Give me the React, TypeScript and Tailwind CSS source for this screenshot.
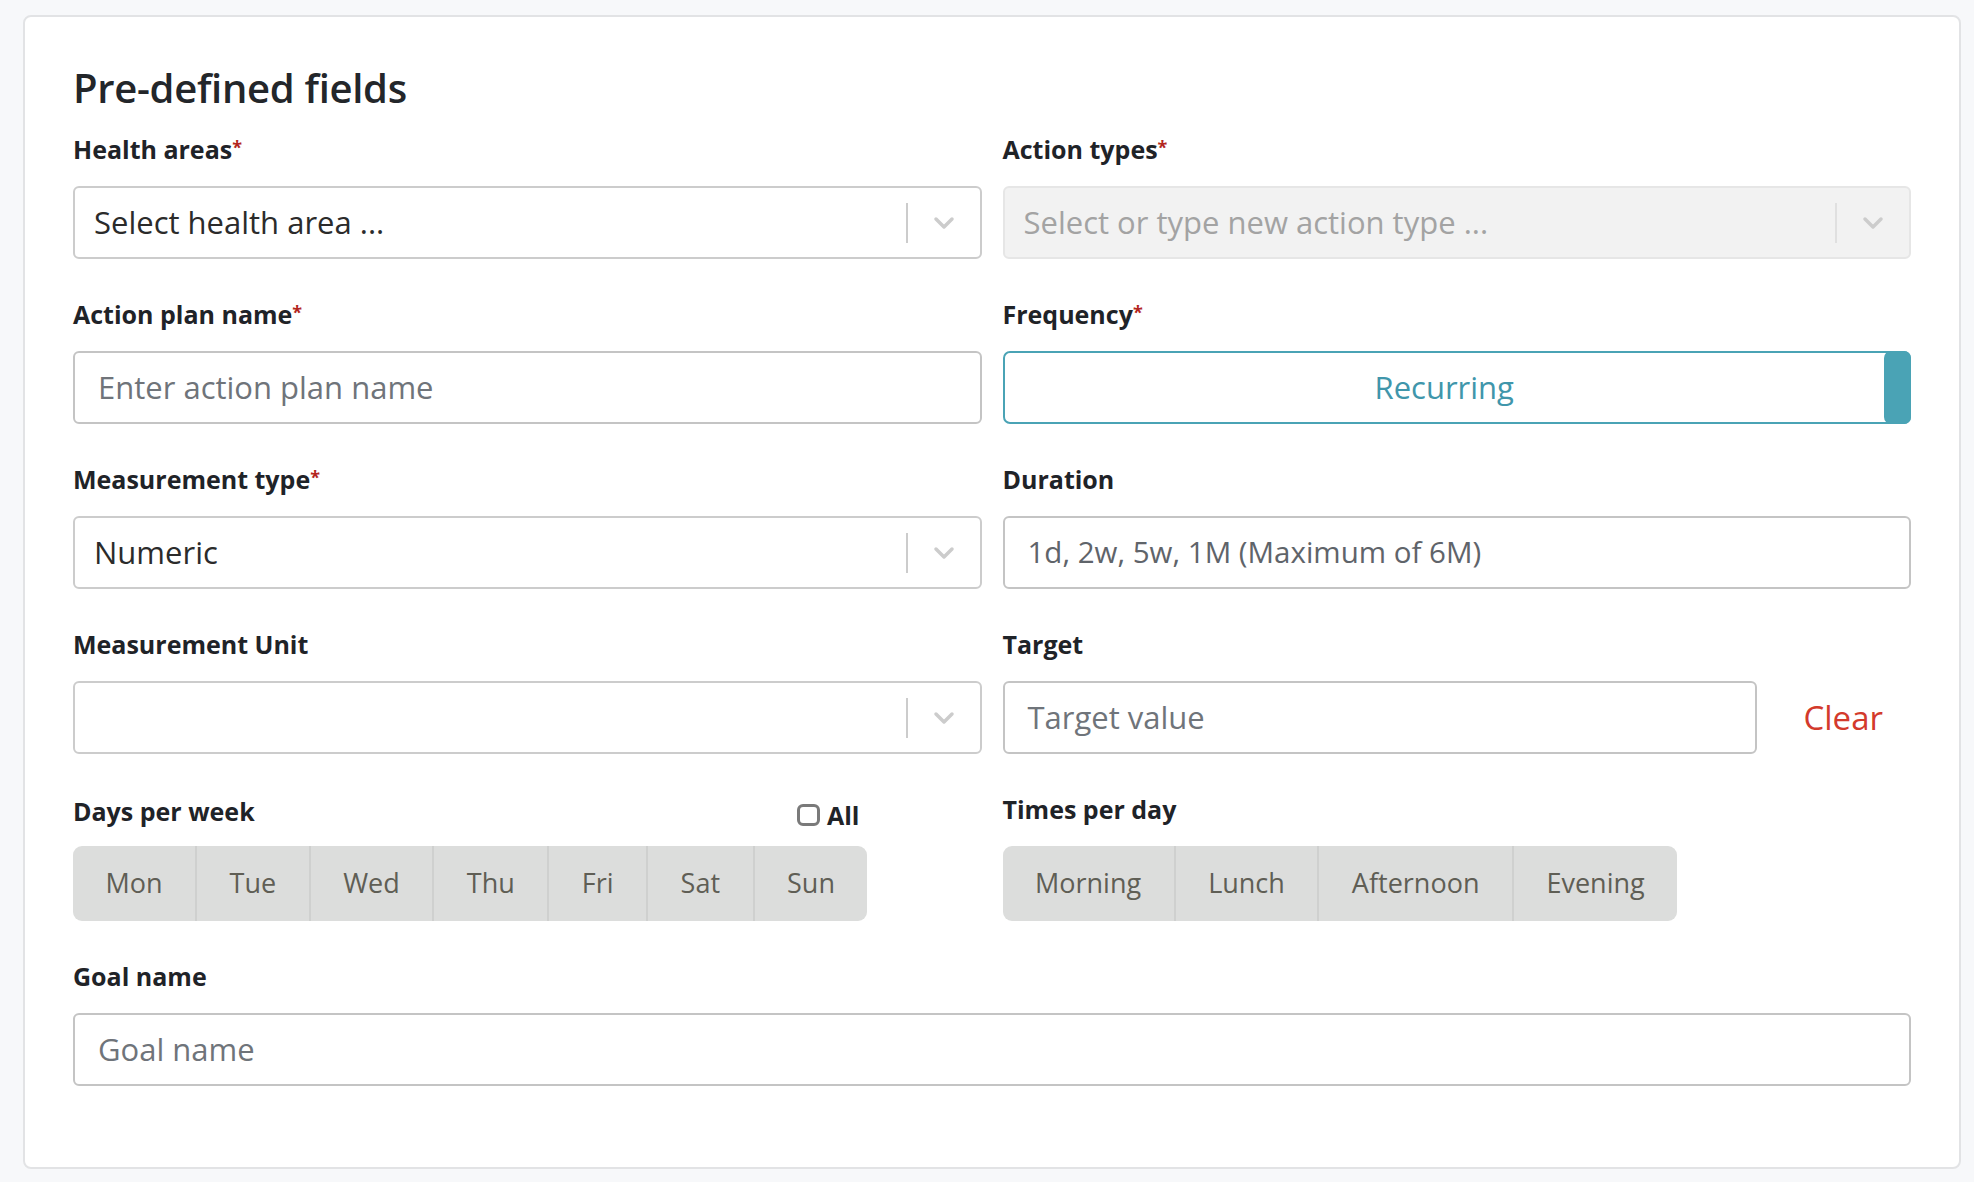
import React from "react";

const font = { fontFamily: "'Open Sans', Lato, sans-serif" };

function Label({ text, required }: { text: string; required?: boolean }) {
  return (
    <div className="h-[30px] leading-[30px] text-[25px] font-bold text-[#1f2328]">
      {text}
      {required && <span className="text-[#b3261e] text-[18px] align-top leading-[26px]">*</span>}
    </div>
  );
}

function Chevron() {
  return (
    <svg width="22" height="14" viewBox="0 0 22 14" fill="none">
      <path d="M3 3 L11 11 L19 3" stroke="#cccccc" strokeWidth="3.5" strokeLinecap="round" strokeLinejoin="round" />
    </svg>
  );
}

function Select({ value, placeholder, disabled }: { value?: string; placeholder?: string; disabled?: boolean }) {
  return (
    <div
      className={`h-[73px] flex items-center rounded-[6px] border-2 ${
        disabled ? "bg-[#f2f2f2] border-[#e6e6e6]" : "bg-white border-[#cccccc]"
      }`}
    >
      <div className={`flex-1 pl-[19px] text-[31px] ${value ? "text-[#2b2b2b]" : disabled ? "text-[#a3a3a3]" : "text-[#2b2b2b]"}`}>
        {value || placeholder}
      </div>
      <div className={`w-[2px] h-[40px] ${disabled ? "bg-[#e0e0e0]" : "bg-[#cccccc]"}`} />
      <div className="w-[72px] flex items-center justify-center">
        <Chevron />
      </div>
    </div>
  );
}

function Input({ placeholder, className = "" }: { placeholder: string; className?: string }) {
  return (
    <div className={`h-[73px] flex items-center rounded-[6px] border-2 border-[#c4c4c4] bg-white pl-[23px] ${className}`}>
      {placeholder}
    </div>
  );
}

function Segments({ items }: { items: string[] }) {
  return (
    <div className="flex h-[75px] w-fit rounded-[9px] bg-[#dcdddc] overflow-hidden">
      {items.map((d, i) => (
        <div
          key={d}
          className={`flex items-center px-[32.5px] text-[27px] text-[#5f5e55] ${i > 0 ? "border-l-2 border-[#cfd0cf]" : ""}`}
        >
          {d}
        </div>
      ))}
    </div>
  );
}

export default function App() {
  return (
    <div style={font} className="min-h-screen bg-[#f7f8fa] pl-[23px] pr-[13px] pt-[15px] pb-[14px]">
      <div className="bg-white border-2 border-[#e2e3e5] rounded-[8px] px-[48px] pt-[49px] pb-[81px]">
        <h1 className="h-[44px] leading-[44px] text-[40px] font-semibold tracking-[-0.3px] text-[#23262a]">Pre-defined fields</h1>
        <div className="mt-[24px] grid grid-cols-2 gap-x-[21px] gap-y-[40px]">
          <div className="flex flex-col gap-[22px]">
            <Label text="Health areas" required />
            <Select placeholder="Select health area ..." />
          </div>
          <div className="flex flex-col gap-[22px]">
            <Label text="Action types" required />
            <Select placeholder="Select or type new action type ..." disabled />
          </div>

          <div className="flex flex-col gap-[22px]">
            <Label text="Action plan name" required />
            <Input placeholder="Enter action plan name" className="text-[31px] text-[#6f747a]" />
          </div>
          <div className="flex flex-col gap-[22px]">
            <Label text="Frequency" required />
            <div className="h-[73px] flex rounded-[7px] border-2 border-[#4aa3b5] bg-white">
              <div className="flex-1 flex items-center justify-center text-[31px] text-[#4096ab]">Recurring</div>
              <div className="w-[27px] -my-[2px] -mr-[2px] rounded-[7px] bg-[#4aa3b5]" />
            </div>
          </div>

          <div className="flex flex-col gap-[22px]">
            <Label text="Measurement type" required />
            <Select value="Numeric" />
          </div>
          <div className="flex flex-col gap-[22px]">
            <Label text="Duration" />
            <Input placeholder="1d, 2w, 5w, 1M (Maximum of 6M)" className="text-[29.5px] text-[#5f646a]" />
          </div>

          <div className="flex flex-col gap-[22px]">
            <Label text="Measurement Unit" />
            <Select value="" />
          </div>
          <div className="flex flex-col gap-[22px]">
            <Label text="Target" />
            <div className="flex items-center">
              <Input placeholder="Target value" className="w-[754px] text-[31px] text-[#6f747a]" />
              <button className="ml-[47px] text-[33px] text-[#d33a2c]">Clear</button>
            </div>
          </div>

          <div className="flex flex-col gap-[20px] w-fit">
            <div className="flex items-end justify-between h-[32px]">
              <Label text="Days per week" />
              <label className="flex items-center gap-[7px] mr-[8px] mb-[-8px]">
                <span className="w-[23px] h-[22px] rounded-[6px] border-[3px] border-[#7a7a7a] bg-white" />
                <span className="text-[25px] font-bold text-[#1f2328]">All</span>
              </label>
            </div>
            <Segments items={["Mon", "Tue", "Wed", "Thu", "Fri", "Sat", "Sun"]} />
          </div>
          <div className="flex flex-col gap-[22px]">
            <Label text="Times per day" />
            <Segments items={["Morning", "Lunch", "Afternoon", "Evening"]} />
          </div>

          <div className="col-span-2 flex flex-col gap-[22px]">
            <Label text="Goal name" />
            <Input placeholder="Goal name" className="text-[31px] text-[#6f747a]" />
          </div>
        </div>
      </div>
    </div>
  );
}
